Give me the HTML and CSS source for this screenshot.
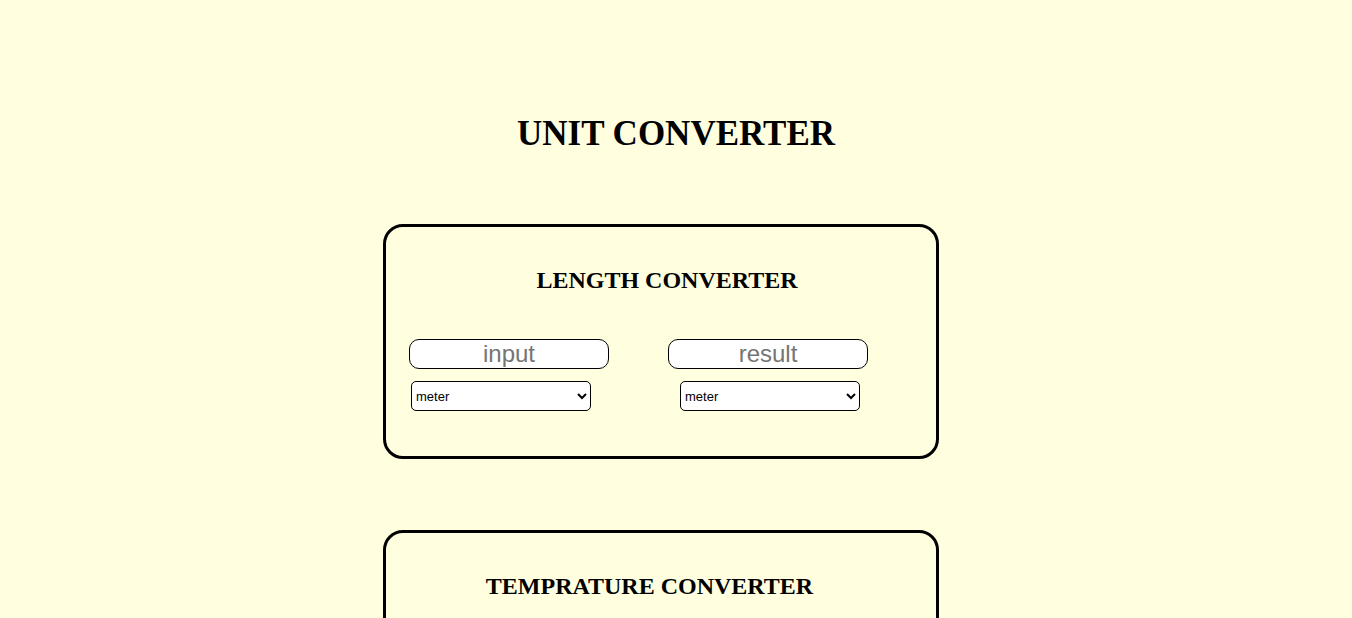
FILE: index.html
```html
<!DOCTYPE html>
<html>
<head>
<meta charset="utf-8">
<link rel="stylesheet" href="styles.css">
</head>
<body>
<h1 class="title">UNIT CONVERTER</h1>
<section class="card">
  <h2 class="card-title card-title--length">LENGTH CONVERTER</h2>
  <div class="row">
    <div class="col">
      <input class="field" type="text" placeholder="input">
      <select class="unit unit--left">
        <option>meter</option>
        <option>kilometer</option>
        <option>centimeter</option>
      </select>
    </div>
    <div class="col">
      <input class="field" type="text" placeholder="result">
      <select class="unit unit--right">
        <option>meter</option>
        <option>kilometer</option>
        <option>centimeter</option>
      </select>
    </div>
  </div>
</section>
<section class="card">
  <h2 class="card-title card-title--temp">TEMPRATURE CONVERTER</h2>
  <div class="row">
    <div class="col">
      <input class="field" type="text" placeholder="input">
    </div>
  </div>
</section>
</body>
</html>
```
FILE: styles.css
```css
html, body {
  margin: 0;
  padding: 0;
  background: #ffffe0;
  font-family: "Liberation Serif", "Times New Roman", serif;
  color: #000;
}
body {
  padding-top: 111px;
}
.title {
  margin: 0 0 67px 0;
  text-align: center;
  font-size: 35px;
  line-height: 46px;
  font-weight: bold;
}
.card {
  box-sizing: border-box;
  width: 556px;
  margin: 0 0 71px 383px;
  border: 3px solid #000;
  border-radius: 20px;
  padding: 37px 0 45px 23px;
  height: 235px;
}
.card-title {
  margin: 0;
  font-size: 24px;
  line-height: 32px;
  font-weight: bold;
  text-align: center;
}
.card-title--length { margin-left: -11px; }
.card-title--temp { margin-left: -46px; }
.row {
  display: flex;
  gap: 59px;
  margin-top: 43px;
}
.col {
  display: flex;
  flex-direction: column;
  width: 200px;
}
.field {
  box-sizing: border-box;
  width: 200px;
  height: 30px;
  border: 1px solid #000;
  border-radius: 10px;
  background: #fff;
  font-family: "Liberation Sans", Arial, sans-serif;
  font-size: 24px;
  text-align: center;
  padding: 0;
  outline: none;
}
.field::placeholder { color: #757575; }
.unit {
  box-sizing: border-box;
  width: 180px;
  height: 30px;
  margin-top: 12px;
  border: 1px solid #000;
  border-radius: 5px;
  background: #fff;
  font-family: "Liberation Sans", Arial, sans-serif;
  font-size: 13px;
  color: #000;
}
.unit--left { margin-left: 2px; }
.unit--right { margin-left: 12px; }
```
